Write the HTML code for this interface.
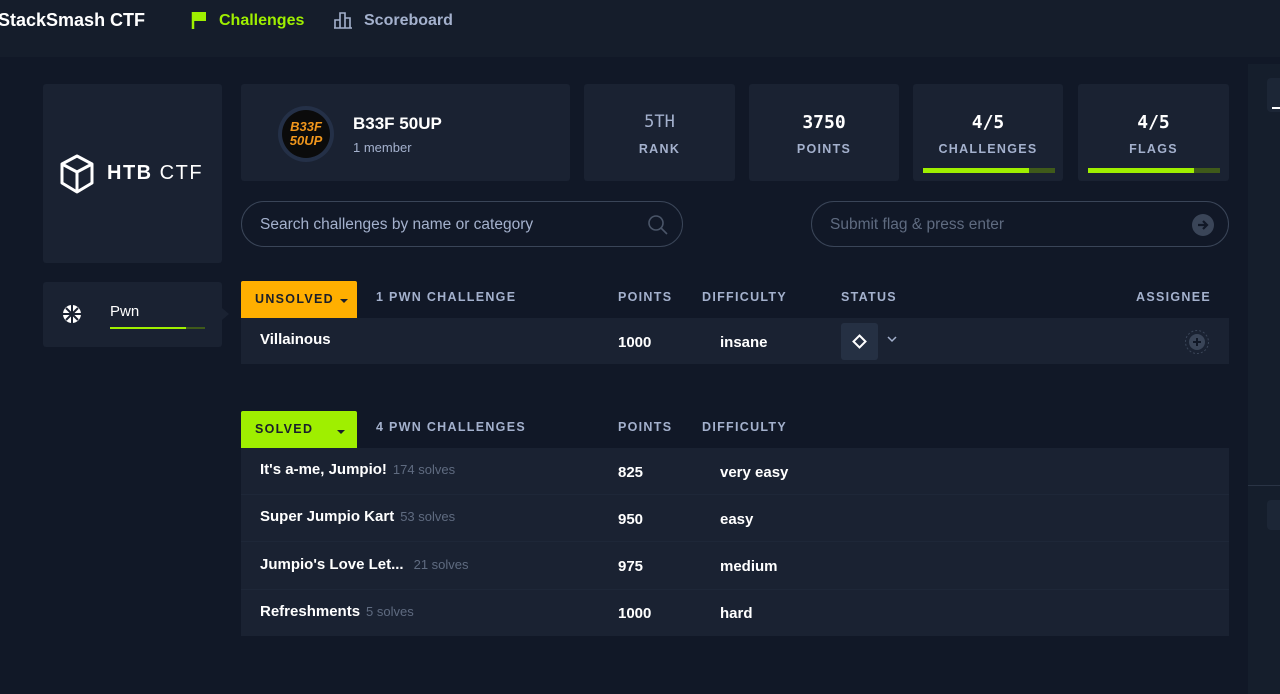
<!DOCTYPE html>
<html><head><meta charset="utf-8"><style>
*{box-sizing:border-box;margin:0;padding:0}
body{width:1280px;height:694px;overflow:hidden;background:#111827;font-family:"Liberation Sans",sans-serif;color:#fff;position:relative}
.abs{position:absolute}
.top{left:0;top:0;width:1280px;height:57px;background:#151d2b}
.card{background:#1a2232;border-radius:3px}
.lbl{font-size:12.5px;font-weight:bold;letter-spacing:1.3px;color:#a4b1cd}
.mono{font-family:"DejaVu Sans Mono","Liberation Mono",monospace}
.row{background:#1a2232;height:46px;left:241px;width:988px}
.rt{font-size:15px;font-weight:bold;color:#fff}
.sv{font-size:13px;color:#5f6b80;font-weight:normal;margin-left:6px}
</style></head><body>
<div class="abs top"></div>
<div class="abs" style="left:-2px;top:10px;font-size:18px;font-weight:bold">StackSmash CTF</div>
<svg class="abs" style="left:191px;top:11px" width="16" height="18" viewBox="0 0 16 18"><path d="M2 1v17" stroke="#9fef00" stroke-width="2.5"/><path d="M3 1h12v9H3z" fill="#9fef00"/></svg>
<div class="abs" style="left:219px;top:12px;font-size:16px;font-weight:bold;color:#9fef00">Challenges</div>
<svg class="abs" style="left:333px;top:11px" width="20" height="18" viewBox="0 0 20 18" fill="none" stroke="#a4b1cd" stroke-width="1.6"><path d="M1 17h18M2 17V9h5v8M7 17V2h5v15M12 17V7h5v10"/></svg>
<div class="abs" style="left:364px;top:12px;font-size:16px;font-weight:bold;color:#a4b1cd">Scoreboard</div>

<div class="abs" style="left:1248px;top:64px;width:32px;height:630px;background:#151e2c"></div>
<div class="abs" style="left:1267px;top:78px;width:13px;height:34px;background:#1c2636;border-radius:4px 0 0 4px"></div>
<div class="abs" style="left:1272px;top:107px;width:8px;height:2px;background:#fff"></div>
<div class="abs" style="left:1248px;top:485px;width:32px;height:1px;background:#2a3445"></div>
<div class="abs" style="left:1267px;top:500px;width:13px;height:30px;background:#1c2636;border-radius:4px 0 0 4px"></div>

<div class="abs card" style="left:43px;top:84px;width:179px;height:179px"></div>
<svg class="abs" style="left:59px;top:154px" width="36" height="40" viewBox="0 0 36 40" fill="none" stroke="#fff" stroke-width="3" stroke-linejoin="round"><path d="M18 2L33 10v19L18 38 3 29V10z M3 10l15 8 15-8 M18 18v20"/></svg>
<div class="abs" style="left:107px;top:162px;font-size:20px;font-weight:bold;letter-spacing:1.5px">HTB <span style="font-weight:normal">CTF</span></div>

<div class="abs card" style="left:43px;top:282px;width:179px;height:65px"></div>
<div class="abs" style="left:222px;top:308px;width:0;height:0;border-top:6px solid transparent;border-bottom:6px solid transparent;border-left:7px solid #1a2232"></div>
<svg class="abs" style="left:60px;top:302px" width="24" height="24" viewBox="0 0 24 24"><circle cx="12" cy="12" r="9" fill="#fff"/><path d="M12 3v18M3 12h18M6 6l12 12M18 6L6 18" stroke="#1a2232" stroke-width="2"/></svg>
<div class="abs" style="left:110px;top:303px;font-size:15px">Pwn</div>
<div class="abs" style="left:110px;top:327px;width:95px;height:2px;background:#3f5a1a"></div>
<div class="abs" style="left:110px;top:327px;width:76px;height:2px;background:#9fef00"></div>

<div class="abs card" style="left:241px;top:84px;width:329px;height:97px"></div>
<div class="abs" style="left:278px;top:106px;width:56px;height:56px;border-radius:50%;background:#243047"></div>
<div class="abs" style="left:282px;top:110px;width:48px;height:48px;border-radius:50%;background:#0b0b0b;color:#f0961c;font-size:13px;font-style:italic;font-weight:bold;line-height:14px;text-align:center;padding-top:10px">B33F<br>50UP</div>
<div class="abs" style="left:353px;top:114px;font-size:17px;font-weight:bold">B33F 50UP</div>
<div class="abs" style="left:353px;top:140px;font-size:13px;color:#a4b1cd">1 member</div>

<div class="abs card" style="left:584px;top:84px;width:151px;height:97px"></div>
<div class="abs mono" style="left:584px;top:112px;width:151px;text-align:center;font-size:17px;color:#a4b1cd">5TH</div>
<div class="abs lbl" style="left:584px;top:142px;width:151px;text-align:center">RANK</div>
<div class="abs card" style="left:749px;top:84px;width:150px;height:97px"></div>
<div class="abs mono" style="left:749px;top:112px;width:150px;text-align:center;font-size:18px;font-weight:bold">3750</div>
<div class="abs lbl" style="left:749px;top:142px;width:150px;text-align:center">POINTS</div>
<div class="abs card" style="left:913px;top:84px;width:150px;height:97px"></div>
<div class="abs mono" style="left:913px;top:112px;width:150px;text-align:center;font-size:18px;font-weight:bold">4/5</div>
<div class="abs lbl" style="left:913px;top:142px;width:150px;text-align:center">CHALLENGES</div>
<div class="abs" style="left:923px;top:168px;width:132px;height:5px;background:#3f5a1a"></div>
<div class="abs" style="left:923px;top:168px;width:106px;height:5px;background:#9fef00"></div>
<div class="abs card" style="left:1078px;top:84px;width:151px;height:97px"></div>
<div class="abs mono" style="left:1078px;top:112px;width:151px;text-align:center;font-size:18px;font-weight:bold">4/5</div>
<div class="abs lbl" style="left:1078px;top:142px;width:151px;text-align:center">FLAGS</div>
<div class="abs" style="left:1088px;top:168px;width:132px;height:5px;background:#3f5a1a"></div>
<div class="abs" style="left:1088px;top:168px;width:106px;height:5px;background:#9fef00"></div>

<div class="abs" style="left:241px;top:201px;width:442px;height:46px;border:1.5px solid #3a4558;border-radius:23px"></div>
<div class="abs" style="left:260px;top:216px;font-size:15.5px;color:#a4b1cd">Search challenges by name or category</div>
<svg class="abs" style="left:647px;top:214px" width="22" height="22" viewBox="0 0 22 22" fill="none" stroke="#4a5568" stroke-width="1.6"><circle cx="9" cy="9" r="7"/><path d="M14 14l6 6"/></svg>
<div class="abs" style="left:811px;top:201px;width:418px;height:46px;border:1.5px solid #3a4558;border-radius:23px"></div>
<div class="abs" style="left:830px;top:216px;font-size:15.5px;color:#5f6b80">Submit flag &amp; press enter</div>
<svg class="abs" style="left:1191px;top:213px" width="24" height="24" viewBox="0 0 24 24"><circle cx="12" cy="12" r="11" fill="#3a4558"/><path d="M7 12h9M12 8l4 4-4 4" stroke="#111827" stroke-width="2.2" fill="none"/></svg>

<div class="abs" style="left:241px;top:281px;width:116px;height:37px;background:#ffaf00;border-radius:2px 2px 0 0"></div>
<div class="abs lbl" style="left:255px;top:292px;color:#1a1f2a">UNSOLVED</div>
<div class="abs" style="left:340px;top:299px;border-left:4px solid transparent;border-right:4px solid transparent;border-top:4px solid #1a1f2a"></div>
<div class="abs lbl" style="left:376px;top:290px">1 PWN CHALLENGE</div>
<div class="abs lbl" style="left:618px;top:290px">POINTS</div>
<div class="abs lbl" style="left:702px;top:290px">DIFFICULTY</div>
<div class="abs lbl" style="left:841px;top:290px">STATUS</div>
<div class="abs lbl" style="left:1136px;top:290px">ASSIGNEE</div>
<div class="abs row" style="top:318px"></div>
<div class="abs rt" style="left:260px;top:331px">Villainous</div>
<div class="abs rt" style="left:618px;top:334px">1000</div>
<div class="abs rt" style="left:720px;top:334px">insane</div>
<div class="abs" style="left:841px;top:323px;width:37px;height:37px;background:#253043;border-radius:3px"></div>
<svg class="abs" style="left:852px;top:334px" width="15" height="15" viewBox="0 0 15 15"><path d="M7.5 1.5L13.5 7.5 7.5 13.5 1.5 7.5z" fill="none" stroke="#fff" stroke-width="2"/></svg>
<svg class="abs" style="left:887px;top:335px" width="10" height="8" viewBox="0 0 10 8"><path d="M1 2l4 4 4-4" fill="none" stroke="#a4b1cd" stroke-width="1.5"/></svg>
<svg class="abs" style="left:1184px;top:329px" width="26" height="26" viewBox="0 0 26 26"><circle cx="13" cy="13" r="11.5" fill="none" stroke="#3a4558" stroke-dasharray="2 2"/><circle cx="13" cy="13" r="8" fill="#3a4558"/><path d="M13 9v8M9 13h8" stroke="#111827" stroke-width="2"/></svg>

<div class="abs" style="left:241px;top:411px;width:116px;height:37px;background:#9fef00;border-radius:2px 2px 0 0"></div>
<div class="abs lbl" style="left:255px;top:422px;color:#1a1f2a">SOLVED</div>
<div class="abs" style="left:337px;top:430px;border-left:4px solid transparent;border-right:4px solid transparent;border-top:4px solid #1a1f2a"></div>
<div class="abs lbl" style="left:376px;top:420px">4 PWN CHALLENGES</div>
<div class="abs lbl" style="left:618px;top:420px">POINTS</div>
<div class="abs lbl" style="left:702px;top:420px">DIFFICULTY</div>

<div class="abs" style="left:241px;top:448px;width:988px;height:188px;background:#1a2232"></div>
<div class="abs" style="left:241px;top:494px;width:988px;height:1px;background:#1e2738"></div>
<div class="abs" style="left:241px;top:541px;width:988px;height:1px;background:#1e2738"></div>
<div class="abs" style="left:241px;top:589px;width:988px;height:1px;background:#1e2738"></div>
<div class="abs rt" style="left:260px;top:461px">It's a-me, Jumpio!<span class="sv">174 solves</span></div>
<div class="abs rt" style="left:618px;top:464px">825</div>
<div class="abs rt" style="left:720px;top:464px">very easy</div>
<div class="abs rt" style="left:260px;top:508px">Super Jumpio Kart<span class="sv">53 solves</span></div>
<div class="abs rt" style="left:618px;top:511px">950</div>
<div class="abs rt" style="left:720px;top:511px">easy</div>
<div class="abs rt" style="left:260px;top:556px">Jumpio's Love Let...<span class="sv" style="margin-left:10px">21 solves</span></div>
<div class="abs rt" style="left:618px;top:558px">975</div>
<div class="abs rt" style="left:720px;top:558px">medium</div>
<div class="abs rt" style="left:260px;top:603px">Refreshments<span class="sv">5 solves</span></div>
<div class="abs rt" style="left:618px;top:605px">1000</div>
<div class="abs rt" style="left:720px;top:605px">hard</div>
</body></html>
